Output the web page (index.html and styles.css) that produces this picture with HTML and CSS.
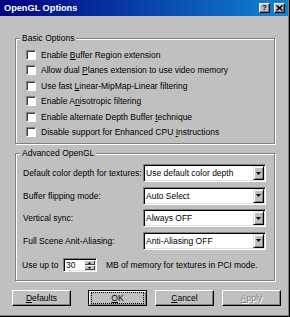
FILE: index.html
```html
<!DOCTYPE html>
<html>
<head>
    <meta charset="utf-8">
    <title>OpenGL Options</title>
    <link rel="stylesheet" href="styles.css">
</head>
<body>
<div class="window">
    <div class="titlebar">
        <span class="title">OpenGL Options</span>
        <div class="title-buttons">
            <span class="tbtn">?</span>
            <span class="tbtn">
                <svg width="7" height="6" viewBox="0 0 7 6"><path d="M0.5 0.5 L6.5 5.5 M6.5 0.5 L0.5 5.5" stroke="#000" stroke-width="1.5"></path></svg>
            </span>
        </div>
    </div>

    <div class="group basic">
        <div class="group-title">Basic Options</div>
        <div class="checks">
            <div class="check-row"><span class="check"></span><span>Enable <u>B</u>uffer Region extension</span></div>
            <div class="check-row"><span class="check"></span><span>Allow dual <u>P</u>lanes extension to use video memory</span></div>
            <div class="check-row"><span class="check"></span><span>Use fast <u>L</u>inear-MipMap-Linear filtering</span></div>
            <div class="check-row"><span class="check"></span><span>Enable A<u>n</u>isotropic filtering</span></div>
            <div class="check-row"><span class="check"></span><span>Enable alternate Depth Buffer <u>t</u>echnique</span></div>
            <div class="check-row"><span class="check"></span><span>Disable support for Enhanced CPU <u>I</u>nstructions</span></div>
        </div>
    </div>

    <div class="group advanced">
        <div class="group-title">Advanced OpenGL</div>
        <div class="fields">
            <div class="field">
                <span class="field-label">Default color depth for textures:</span>
                <div class="combo"><span class="combo-text">Use default color depth</span><span class="combo-btn"><svg width="5" height="3" viewBox="0 0 5 3"><polygon points="0,0 5,0 2.5,3" fill="#000"></polygon></svg></span></div>
            </div>
            <div class="field">
                <span class="field-label">Buffer flipping mode:</span>
                <div class="combo"><span class="combo-text">Auto Select</span><span class="combo-btn"><svg width="5" height="3" viewBox="0 0 5 3"><polygon points="0,0 5,0 2.5,3" fill="#000"></polygon></svg></span></div>
            </div>
            <div class="field">
                <span class="field-label">Vertical sync:</span>
                <div class="combo"><span class="combo-text">Always OFF</span><span class="combo-btn"><svg width="5" height="3" viewBox="0 0 5 3"><polygon points="0,0 5,0 2.5,3" fill="#000"></polygon></svg></span></div>
            </div>
            <div class="field">
                <span class="field-label">Full Scene Anit-Aliasing:</span>
                <div class="combo"><span class="combo-text">Anti-Aliasing OFF</span><span class="combo-btn"><svg width="5" height="3" viewBox="0 0 5 3"><polygon points="0,0 5,0 2.5,3" fill="#000"></polygon></svg></span></div>
            </div>
        </div>
        <div class="mem-row">
            <span class="mem-label">Use up to</span>
            <div class="spin">
                <span class="spin-text">30</span>
                <div class="spin-btns">
                    <span class="spin-btn"><svg width="3" height="2" viewBox="0 0 3 2"><polygon points="1.5,0 3,2 0,2" fill="#000"></polygon></svg></span>
                    <span class="spin-btn"><svg width="3" height="2" viewBox="0 0 3 2"><polygon points="0,0 3,0 1.5,2" fill="#000"></polygon></svg></span>
                </div>
            </div>
            <span class="mem-text">MB of memory for textures in PCI mode.</span>
        </div>
    </div>

    <div class="buttons">
        <div class="btn"><u>D</u>efaults</div>
        <div class="btn default ok"><span class="focus"><u>O</u>K</span></div>
        <div class="btn cancel"><u>C</u>ancel</div>
        <div class="btn apply disabled"><u>A</u>pply</div>
    </div>
</div>
</body>
</html>
```

FILE: styles.css
```css
body {
    margin: 0;
    background-color: #c0c0c0;
    font-family: "Liberation Sans", Arial, sans-serif;
    font-size: 8.5px;
    color: #000;
}

.window {
    width: 290px;
    height: 317px;
    box-sizing: border-box;
    background-color: #c0c0c0;
    box-shadow: inset -1px -1px 0 #000, inset -2px -2px 0 #808080;
}

/* Title bar */
.titlebar {
    height: 16px;
    margin-right: 2px;
    padding: 0 3px 0 4px;
    display: flex;
    align-items: center;
    justify-content: space-between;
    background: linear-gradient(to right, #000080, #1084d0);
    color: #fff;
}

.title {
    font-weight: bold;
    font-size: 9.2px;
}

.title-buttons {
    display: flex;
    gap: 4px;
}

.tbtn {
    width: 11px;
    height: 10px;
    box-sizing: border-box;
    display: flex;
    align-items: center;
    justify-content: center;
    background-color: #c0c0c0;
    border: 1px solid;
    border-color: #fff #000 #000 #fff;
    box-shadow: inset -1px -1px 0 #808080;
    color: #000;
    font-weight: bold;
    font-size: 8px;
    line-height: 8px;
}

/* Group boxes */
.group {
    margin: 0 15px;
    border: 1px solid #808080;
    box-shadow: 1px 1px 0 #fff, inset 1px 1px 0 #fff;
}

.group-title {
    width: max-content;
    margin: -6px 0 0 4px;
    padding: 0 2px;
    line-height: 11px;
    background-color: #c0c0c0;
}

.basic {
    margin-top: 22px;
    padding-bottom: 3px;
}

.checks {
    padding: 3px 0 0 10px;
}

.check-row {
    height: 15.5px;
    display: flex;
    align-items: center;
    gap: 5px;
}

.check {
    width: 10px;
    height: 10px;
    box-sizing: border-box;
    background-color: #fff;
    border: 1px solid;
    border-color: #808080 #fff #fff #808080;
    box-shadow: inset 1px 1px 0 #404040;
}

.advanced {
    margin-top: 9px;
    padding-bottom: 8px;
}

.fields {
    padding: 5px 0 0 7px;
    display: flex;
    flex-direction: column;
    gap: 4.5px;
}

.field {
    height: 18px;
    display: flex;
    align-items: center;
}

.field-label {
    width: 120px;
    white-space: nowrap;
}

.combo {
    width: 123px;
    height: 18px;
    box-sizing: border-box;
    padding: 1px 1px 1px 2px;
    display: flex;
    align-items: center;
    background-color: #fff;
    border: 1px solid;
    border-color: #808080 #fff #fff #808080;
    box-shadow: inset 1px 1px 0 #000, inset -1px -1px 0 #dfdfdf;
}

.combo-text {
    flex: 1;
}

.combo-btn {
    width: 11px;
    height: 14px;
    box-sizing: border-box;
    display: flex;
    align-items: center;
    justify-content: center;
    background-color: #c0c0c0;
    border: 1px solid;
    border-color: #dfdfdf #000 #000 #dfdfdf;
    box-shadow: inset 1px 1px 0 #fff, inset -1px -1px 0 #808080;
}

.mem-row {
    margin-top: 8.5px;
    padding-left: 6px;
    height: 14px;
    display: flex;
    align-items: center;
}

.mem-label {
    width: 41px;
}

.spin {
    width: 34px;
    height: 14px;
    box-sizing: border-box;
    padding: 1px;
    display: flex;
    background-color: #fff;
    border: 1px solid;
    border-color: #808080 #fff #fff #808080;
    box-shadow: inset 1px 1px 0 #000, inset -1px -1px 0 #dfdfdf;
}

.spin-text {
    flex: 1;
    padding-left: 1px;
    line-height: 10px;
}

.spin-btns {
    width: 11px;
    display: flex;
    flex-direction: column;
}

.spin-btn {
    flex: 1;
    display: flex;
    align-items: center;
    justify-content: center;
    background-color: #c0c0c0;
    box-shadow: inset 1px 1px 0 #fff, inset -1px -1px 0 #404040;
}

.mem-text {
    margin-left: 9px;
}

/* Dialog buttons */
.buttons {
    margin-top: 9px;
    padding-left: 12px;
    display: flex;
}

.btn {
    width: 59px;
    height: 16px;
    box-sizing: border-box;
    display: flex;
    align-items: center;
    justify-content: center;
    background-color: #c0c0c0;
    border: 1px solid;
    border-color: #fff #000 #000 #fff;
    box-shadow: inset -1px -1px 0 #808080;
}

.btn.default {
    border-color: #000;
    box-shadow: inset 1px 1px 0 #fff, inset -1px -1px 0 #808080;
    padding: 1px 2px;
}

.focus {
    flex: 1;
    align-self: stretch;
    display: flex;
    align-items: center;
    justify-content: center;
    border: 1px dotted #000;
    line-height: 10px;
}

.ok {
    margin-left: 17px;
}

.cancel,
.apply {
    margin-left: 8px;
}

.disabled {
    color: #808080;
    text-shadow: 1px 1px 0 #fff;
}
```
